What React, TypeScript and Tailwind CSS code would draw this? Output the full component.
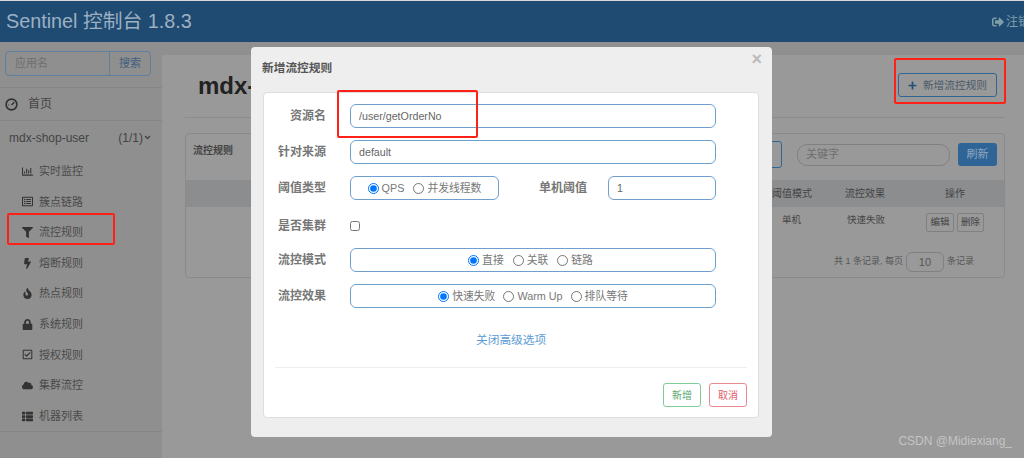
import { FaBolt, FaCloud, FaFilter, FaFire, FaLock, FaPlus, FaRegChartBar, FaRegCheckSquare, FaRegListAlt, FaThList, FaAngleDown, FaSignOutAlt } from "react-icons/fa";

const font = "font-['Liberation_Sans','Noto_Sans_CJK_SC',sans-serif]";

const menu = [
    { icon: <FaRegChartBar />, label: "实时监控" },
    { icon: <FaRegListAlt />, label: "簇点链路" },
    { icon: <FaFilter />, label: "流控规则" },
    { icon: <FaBolt />, label: "熔断规则" },
    { icon: <FaFire />, label: "热点规则" },
    { icon: <FaLock />, label: "系统规则" },
    { icon: <FaRegCheckSquare />, label: "授权规则" },
    { icon: <FaCloud />, label: "集群流控" },
    { icon: <FaThList />, label: "机器列表" },
];

const Radio = ({ label, checked, name }: { label: string; checked?: boolean; name: string }) => (
    <label className="flex items-center gap-[3px] text-[10.8px] text-[#777]">
        <input type="radio" name={name} defaultChecked={checked} className="m-0 h-[11px] w-[11px] accent-[#0075ff]" />
        <span>{label}</span>
    </label>
);

const FormLabel = ({ text }: { text: string }) => (
    <div className="w-[51px] shrink-0 text-right text-[12px] font-bold text-[#777]">{text}</div>
);

const fieldBox = "flex h-6 items-center rounded-[6px] border border-[#6f9fcf] bg-white";

const App = () => {
    return (
        <div className={`${font} relative flex h-[458px] w-[1024px] flex-col overflow-hidden bg-[#8f8f8f]`}>
            <div className="h-px bg-[#d8d8d8]" />
            <div className="flex h-[41px] shrink-0 items-center justify-between bg-[#1f4b73] pl-[6px]">
                <span className="text-[19.8px] leading-none text-[#9db0c1]">Sentinel 控制台 1.8.3</span>
                <div className="flex w-[32px] items-center gap-[2px] overflow-hidden whitespace-nowrap text-[12px] text-[#7f9fa8]">
                    <FaSignOutAlt className="shrink-0 text-[12px]" />
                    <span>注销</span>
                </div>
            </div>

            <div className="flex flex-1">
                <aside className="flex w-[162px] shrink-0 flex-col">
                    <div className="flex h-[46px] border-b border-[#868686] px-[5px] pt-[9px]">
                        <div className="flex h-[25px] w-[146px] overflow-hidden rounded-[4px] border border-[#5f7f9f] text-[11px]">
                            <div className="flex flex-1 items-center pl-[9px] text-[#6e6e6e]">应用名</div>
                            <div className="flex w-[41px] items-center justify-center border-l border-[#5f7f9f] text-[#3f5f7f]">搜索</div>
                        </div>
                    </div>
                    <div className="flex h-[33px] items-center gap-[10px] border-b border-[#868686] pl-[5px] text-[12px] text-[#444]">
                        <svg viewBox="0 0 14 14" className="h-[13px] w-[13px]" fill="none" stroke="#333" strokeWidth="1.8">
                            <circle cx="7" cy="7" r="5.8" />
                            <path d="M7 7.5 L10 4.5" strokeWidth="1.5" />
                            <path d="M3.5 7.5 H4.5" strokeWidth="1.2" />
                        </svg>
                        <span>首页</span>
                    </div>
                    <div className="flex h-[33px] items-center justify-between pl-[9px] pr-[10px] text-[12px] text-[#444]">
                        <span>mdx-shop-user</span>
                        <span className="flex items-center">(1/1)<FaAngleDown className="text-[9px]" /></span>
                    </div>
                    <div className="border-b border-[#868686] pt-[2px]">
                        {menu.map((item) => (
                            <div key={item.label} className="flex h-[30.6px] items-center gap-[6px] pl-[22px] text-[11px] text-[#4a4a4a]">
                                <span className="flex w-[11px] justify-center text-[11px] text-[#333]">{item.icon}</span>
                                <span>{item.label}</span>
                            </div>
                        ))}
                    </div>
                </aside>

                <main className="mt-[13px] flex-1 bg-[#999999] pl-[23px] pr-[19px]">
                    <div className="flex h-[63px] items-center justify-between border-b border-[#8c8c8c] pb-[1px]">
                        <h1 className="ml-[13px] text-[24px] font-bold text-[#222]">mdx-shop-user</h1>
                        <button className="mr-[8px] mt-[-1px] flex h-6 w-[99px] items-center justify-center gap-[6px] rounded-[3px] border border-[#2f6496] text-[10.7px] text-[#4a5a68]">
                            <FaPlus className="text-[9px] text-[#234e77]" />
                            新增流控规则
                        </button>
                    </div>
                    <div className="mt-[15px] h-[145px] rounded-[4px] border border-[#8a8a8a]">
                        <div className="flex h-[46px] items-start justify-between pl-[7px] pr-[7px] pt-[7px]">
                            <span className="pt-[2px] text-[10px] font-bold text-[#444]">流控规则</span>
                            <div className="flex items-center gap-[15px]">
                                <div className="h-[27px] w-[60px] rounded-[3px] border border-[#2f6496]" />
                                <div className="flex h-[22px] w-[153px] items-center rounded-[10px] border border-[#808080] pl-[8px] text-[11px] text-[#6e6e6e]">关键字</div>
                                <button className="-ml-[7px] flex h-[23px] w-[39px] items-center justify-center rounded-[3px] bg-[#2f6496] text-[11px] text-[#8fa8c0]">刷新</button>
                            </div>
                        </div>
                        <div className="flex h-[27px] items-center justify-end bg-[#8b8d8f] text-[10px] text-[#444]">
                            <span className="w-[73px]">阈值模式</span>
                            <span className="w-[100px]">流控效果</span>
                            <span className="w-[59px]">操作</span>
                        </div>
                        <div className="flex h-[33px] items-start justify-end pt-[6px] text-[9.5px] text-[#444]">
                            <span className="w-[65px]">单机</span>
                            <span className="w-[79px]">快速失败</span>
                            <div className="mr-[20px] flex gap-[3px]">
                                <span className="flex h-[19px] w-[28px] items-center justify-center rounded-[2px] border border-[#808080]">编辑</span>
                                <span className="flex h-[19px] w-[27px] items-center justify-center rounded-[2px] border border-[#808080]">删除</span>
                            </div>
                        </div>
                        <div className="mt-[12px] flex items-center justify-end gap-[3px] pr-[30px] text-[9px] text-[#555]">
                            <span>共 1 条记录, 每页</span>
                            <span className="flex h-5 w-[38px] items-center justify-center rounded-[6px] border border-[#808080] text-[11px]">10</span>
                            <span>条记录</span>
                        </div>
                    </div>
                </main>
            </div>

            <div className="absolute bottom-[8px] right-[12px] text-[12px] text-[#c4c4c4]">CSDN @Midiexiang_</div>

            {/* modal */}
            <div className="absolute left-[251px] top-[47px] flex h-[390px] w-[521px] flex-col rounded-[4px] bg-[#eeeeee] pb-[19px] pl-3 pr-[13px]">
                <div className="flex h-[45px] shrink-0 items-start justify-between pt-[12px]">
                    <span className="-ml-px text-[11.7px] font-bold text-[#555]">新增流控规则</span>
                    <span className="-mr-[3px] -mt-[13px] text-[18px] font-bold text-[#bbb]">×</span>
                </div>
                <div className="flex-1 rounded-[4px] border border-[#dddddd] bg-white px-[11px] pt-[11px]">
                    <div className="flex flex-col gap-3">
                        <div className="flex items-center gap-[24px]">
                            <FormLabel text="资源名" />
                            <div className={`${fieldBox} w-[366px] pl-[8px] text-[10.7px] text-[#666]`}>/user/getOrderNo</div>
                        </div>
                        <div className="flex items-center gap-[24px]">
                            <FormLabel text="针对来源" />
                            <div className={`${fieldBox} w-[366px] pl-[8px] text-[10.7px] text-[#666]`}>default</div>
                        </div>
                        <div className="flex items-center gap-[24px]">
                            <FormLabel text="阈值类型" />
                            <div className={`${fieldBox} w-[149px] justify-center gap-[9px]`}>
                                <Radio name="grade" label="QPS" checked />
                                <Radio name="grade" label="并发线程数" />
                            </div>
                            <div className="ml-[16px] w-[48px] shrink-0 text-[12px] font-bold text-[#777]">单机阈值</div>
                            <div className={`${fieldBox} -ml-[3px] w-[108px] pl-[8px] text-[10.7px] text-[#666]`}>1</div>
                        </div>
                        <div className="flex h-[24px] items-center gap-[24px] pt-[4px]">
                            <FormLabel text="是否集群" />
                            <input type="checkbox" className="m-0 h-[10px] w-[10px]" />
                        </div>
                        <div className="flex items-center gap-[24px]">
                            <FormLabel text="流控模式" />
                            <div className={`${fieldBox} w-[366px] justify-center gap-[9px] pr-[5px]`}>
                                <Radio name="mode" label="直接" checked />
                                <Radio name="mode" label="关联" />
                                <Radio name="mode" label="链路" />
                            </div>
                        </div>
                        <div className="flex items-center gap-[24px]">
                            <FormLabel text="流控效果" />
                            <div className={`${fieldBox} w-[366px] justify-center gap-[8px]`}>
                                <Radio name="effect" label="快速失败" checked />
                                <Radio name="effect" label="Warm Up" />
                                <Radio name="effect" label="排队等待" />
                            </div>
                        </div>
                    </div>
                    <div className="mt-[24px] h-[16px] pl-[201px] text-[11.7px] leading-4 text-[#5b9bd5]">关闭高级选项</div>
                    <div className="mt-[19px] border-t border-[#eeeeee] pt-[15px]">
                        <div className="flex justify-end gap-2">
                            <button className="h-6 w-[38px] rounded-[3px] border border-[#7fce99] text-[10px] text-[#55a86f]">新增</button>
                            <button className="h-6 w-[38px] rounded-[3px] border border-[#ea8a92] text-[10px] text-[#e0606a]">取消</button>
                        </div>
                    </div>
                </div>
            </div>

            {/* red annotations */}
            <div className="absolute left-[7px] top-[213px] h-[32px] w-[108px] rounded-[2px] border-2 border-[#ff2018]" />
            <div className="absolute left-[337px] top-[90px] h-[48px] w-[141px] rounded-[2px] border-2 border-[#ff2018]" />
            <div className="absolute left-[894px] top-[58px] h-[46px] w-[112px] rounded-[2px] border-2 border-[#ff2018]" />
        </div>
    );
}

export default App;
